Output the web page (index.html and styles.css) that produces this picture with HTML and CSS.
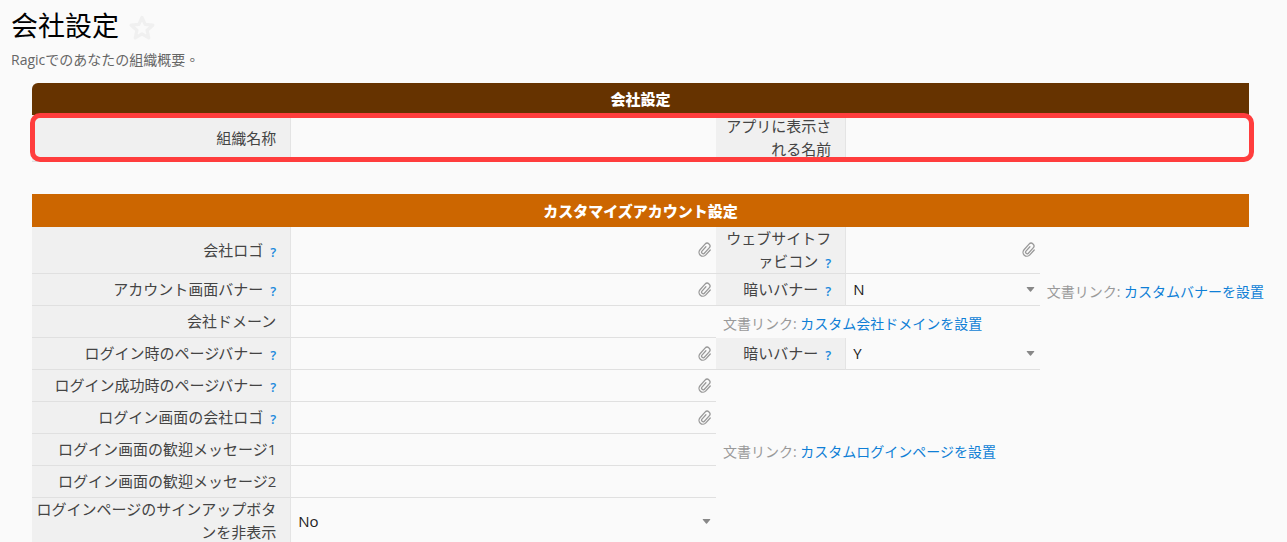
FILE: index.html
```html
<!DOCTYPE html>
<html lang="ja">
<head>
<meta charset="utf-8">
<title>会社設定</title>
<link rel="stylesheet" href="styles.css">
</head>
<body>
<svg class="defs" aria-hidden="true">
  <symbol id="clip" viewBox="0 0 16 16">
    <g transform="rotate(42 8 8)"><path d="M11.9 4.5v6.6a3.9 3.9 0 0 1-7.8 0V3.6a2.8 2.8 0 0 1 5.6 0v7.2a1.6 1.6 0 0 1-3.2 0V5"/></g>
  </symbol>
  <symbol id="caret" viewBox="0 0 10 6"><path d="M1 0h8q1 0 .4.9L5.6 5.3q-.6.6-1.2 0L.6.9Q0 0 1 0z"/></symbol>
</svg>
<header class="page-header">
  <div class="title-row">
    <h1 class="title">会社設定</h1>
    <button class="star" type="button" aria-label="お気に入り">
      <svg viewBox="0 0 24 24"><path d="M12 2.2l2.9 6.4 7.1.8-5.3 4.7 1.5 7L12 17.5l-6.2 3.6 1.5-7L2 9.4l7.1-.8z"/></svg>
    </button>
  </div>
  <p class="subtitle">Ragicでのあなたの組織概要。</p>
</header>
<main class="sections">
  <section class="section">
    <h2 class="bar bar-brown">会社設定</h2>
    <table class="form">
      <colgroup><col class="c1"><col class="c2"><col class="c3"><col class="c4"><col class="c5"></colgroup>
      <tr>
        <th class="label"><label for="org">組織名称</label></th>
        <td class="field"><input class="text" id="org" type="text"></td>
        <th class="label"><label for="app">アプリに表示される名前</label></th>
        <td class="field"><input class="text" id="app" type="text"></td>
        <td></td>
      </tr>
    </table>
    <div class="highlight"></div>
  </section>
  <section class="section">
    <h2 class="bar bar-orange">カスタマイズアカウント設定</h2>
    <table class="form">
      <colgroup><col class="c1"><col class="c2"><col class="c3"><col class="c4"><col class="c5"></colgroup>
      <tr>
        <th class="label">会社ロゴ<button class="help" type="button">?</button></th>
        <td class="field"><button class="attach" type="button" aria-label="会社ロゴを添付"><svg><use href="#clip"/></svg></button></td>
        <th class="label">ウェブサイトファビコン<button class="help" type="button">?</button></th>
        <td class="field"><button class="attach" type="button" aria-label="ファビコンを添付"><svg><use href="#clip"/></svg></button></td>
        <td></td>
      </tr>
      <tr>
        <th class="label">アカウント画面バナー<button class="help" type="button">?</button></th>
        <td class="field"><button class="attach" type="button" aria-label="アカウント画面バナーを添付"><svg><use href="#clip"/></svg></button></td>
        <th class="label"><label for="dark1">暗いバナー</label><button class="help" type="button">?</button></th>
        <td class="field"><div class="choice"><select class="select" id="dark1"><option>N</option><option>Y</option></select><svg class="caret"><use href="#caret"/></svg></div></td>
        <td class="note">文書リンク: <a href="#">カスタムバナーを設置</a></td>
      </tr>
      <tr>
        <th class="label"><label for="domain">会社ドメーン</label></th>
        <td class="field"><input class="text" id="domain" type="text"></td>
        <td class="note" colspan="3">文書リンク: <a href="#">カスタム会社ドメインを設置</a></td>
      </tr>
      <tr>
        <th class="label">ログイン時のページバナー<button class="help" type="button">?</button></th>
        <td class="field"><button class="attach" type="button" aria-label="ログイン時のページバナーを添付"><svg><use href="#clip"/></svg></button></td>
        <th class="label"><label for="dark2">暗いバナー</label><button class="help" type="button">?</button></th>
        <td class="field"><div class="choice"><select class="select" id="dark2"><option>Y</option><option>N</option></select><svg class="caret"><use href="#caret"/></svg></div></td>
        <td></td>
      </tr>
      <tr>
        <th class="label">ログイン成功時のページバナー<button class="help" type="button">?</button></th>
        <td class="field"><button class="attach" type="button" aria-label="ログイン成功時のページバナーを添付"><svg><use href="#clip"/></svg></button></td>
        <td colspan="3"></td>
      </tr>
      <tr>
        <th class="label">ログイン画面の会社ロゴ<button class="help" type="button">?</button></th>
        <td class="field"><button class="attach" type="button" aria-label="ログイン画面の会社ロゴを添付"><svg><use href="#clip"/></svg></button></td>
        <td colspan="3"></td>
      </tr>
      <tr>
        <th class="label"><label for="msg1">ログイン画面の歓迎メッセージ1</label></th>
        <td class="field"><input class="text" id="msg1" type="text"></td>
        <td class="note" colspan="3">文書リンク: <a href="#">カスタムログインページを設置</a></td>
      </tr>
      <tr>
        <th class="label"><label for="msg2">ログイン画面の歓迎メッセージ2</label></th>
        <td class="field"><input class="text" id="msg2" type="text"></td>
        <td colspan="3"></td>
      </tr>
      <tr>
        <th class="label"><label for="signup">ログインページのサインアップボタンを非表示</label></th>
        <td class="field"><div class="choice"><select class="select" id="signup"><option>No</option><option>Yes</option></select><svg class="caret"><use href="#caret"/></svg></div></td>
        <td colspan="3"></td>
      </tr>
    </table>
  </section>
</main>
</body>
</html>
```

FILE: styles.css
```css
* { box-sizing: border-box; }

body {
  margin: 0;
  background: #fafafa;
  color: #444;
  font: 15px/23px "Open Sans", "Noto Sans CJK TC", sans-serif;
  font-feature-settings: "locl" 0;
}

button {
  padding: 0;
  border: 0;
  background: none;
  font: inherit;
  cursor: pointer;
}

.defs { position: absolute; width: 0; height: 0; }

.page-header { padding: 8px 11px 0; }
.title-row { display: flex; align-items: center; gap: 10px; }
.title { margin: 0; color: #000; font-size: 27px; line-height: 36px; font-weight: 400; }
.star { display: flex; padding-top: 4px; }
.star svg { width: 26px; height: 26px; fill: none; stroke: #f0f0f0; stroke-width: 3; stroke-linejoin: round; }
.subtitle { margin: 4px 0 0; color: #666; font-size: 14px; line-height: 24px; }

.sections {
  display: flex;
  flex-direction: column;
  gap: 32px;
  margin: 11px 38px 0 32px;
}
.section { position: relative; }

.bar {
  margin: 0;
  padding-top: 1px;
  color: #fff;
  font-size: 15px;
  line-height: 31px;
  font-weight: 900;
  text-align: center;
}
.bar-brown { background: #663300; border-top-left-radius: 6px; }
.bar-orange { background: #cc6600; padding-top: 2px; }

.form { width: 100%; border-collapse: separate; border-spacing: 0; table-layout: fixed; }
.c1 { width: 21.3%; }
.c2 { width: 34.9%; }
.c3 { width: 10.7%; }
.c4 { width: 15.9%; }

.form td, .form th { height: 32px; padding: 0; vertical-align: middle; }
.form .label {
  padding: 0 14px 0 4px;
  border-right: 1px solid #e4e4e4;
  border-bottom: 1px solid #e0e0e0;
  background: #f0f0f0;
  font-weight: 400;
  text-align: right;
}
.form .field { border-bottom: 1px solid #e0e0e0; }
.form .note { padding: 3px 0 0 7px; color: #999; font-size: 14px; line-height: 20px; white-space: nowrap; }
.note a { color: #0f7fd6; text-decoration: none; }

.help { margin-left: 7px; color: #1a88dc; font-size: 13px; line-height: 14px; font-weight: 600; vertical-align: -1px; }

.text { display: block; width: 100%; height: 24px; padding: 0 7px; border: 0; background: none; font: inherit; }

.attach { display: block; margin: 0 3px 0 auto; }
.attach svg { display: block; width: 16px; height: 16px; fill: none; stroke: #999; stroke-width: 1.3; stroke-linecap: round; }

.choice { display: flex; align-items: center; padding-right: 5px; }
.select { flex: 1; min-width: 0; padding: 0 7px; border: 0; background: none; color: #222; font: inherit; appearance: none; }
.caret { width: 9px; height: 5px; fill: #888; }

.highlight {
  position: absolute;
  inset: 30px -5px 0 -2px;
  border: 5px solid #ff3d3d;
  border-radius: 10px;
}
```
